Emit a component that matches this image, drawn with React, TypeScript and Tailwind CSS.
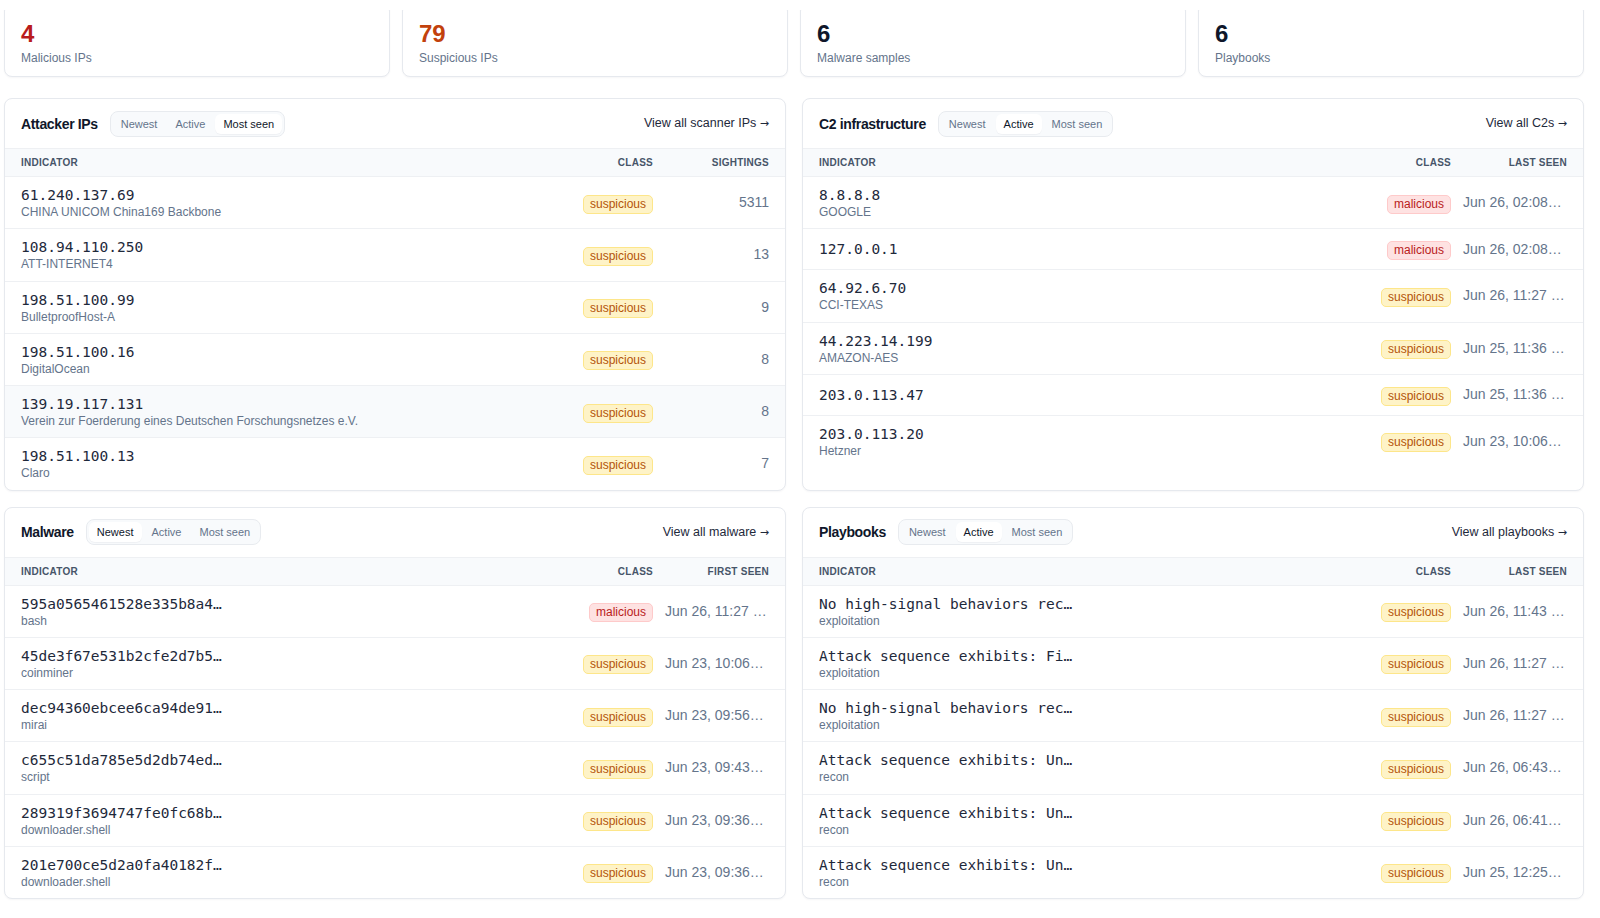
import React from "react";

type Cls = "malicious" | "suspicious";
type Row = { main: string; sub?: string; cls: Cls; last: string; hover?: boolean };

const statCards = [
  { value: "4", label: "Malicious IPs", color: "text-[#b91c1c]" },
  { value: "79", label: "Suspicious IPs", color: "text-[#c2410c]" },
  { value: "6", label: "Malware samples", color: "text-[#0f172a]" },
  { value: "6", label: "Playbooks", color: "text-[#0f172a]" },
];

const attackers: Row[] = [
  { main: "61.240.137.69", sub: "CHINA UNICOM China169 Backbone", cls: "suspicious", last: "5311" },
  { main: "108.94.110.250", sub: "ATT-INTERNET4", cls: "suspicious", last: "13" },
  { main: "198.51.100.99", sub: "BulletproofHost-A", cls: "suspicious", last: "9" },
  { main: "198.51.100.16", sub: "DigitalOcean", cls: "suspicious", last: "8" },
  { main: "139.19.117.131", sub: "Verein zur Foerderung eines Deutschen Forschungsnetzes e.V.", cls: "suspicious", last: "8", hover: true },
  { main: "198.51.100.13", sub: "Claro", cls: "suspicious", last: "7" },
];

const c2: Row[] = [
  { main: "8.8.8.8", sub: "GOOGLE", cls: "malicious", last: "Jun 26, 02:08…" },
  { main: "127.0.0.1", cls: "malicious", last: "Jun 26, 02:08…" },
  { main: "64.92.6.70", sub: "CCI-TEXAS", cls: "suspicious", last: "Jun 26, 11:27 …" },
  { main: "44.223.14.199", sub: "AMAZON-AES", cls: "suspicious", last: "Jun 25, 11:36 …" },
  { main: "203.0.113.47", cls: "suspicious", last: "Jun 25, 11:36 …" },
  { main: "203.0.113.20", sub: "Hetzner", cls: "suspicious", last: "Jun 23, 10:06…" },
];

const malware: Row[] = [
  { main: "595a0565461528e335b8a4…", sub: "bash", cls: "malicious", last: "Jun 26, 11:27 …" },
  { main: "45de3f67e531b2cfe2d7b5…", sub: "coinminer", cls: "suspicious", last: "Jun 23, 10:06…" },
  { main: "dec94360ebcee6ca94de91…", sub: "mirai", cls: "suspicious", last: "Jun 23, 09:56…" },
  { main: "c655c51da785e5d2db74ed…", sub: "script", cls: "suspicious", last: "Jun 23, 09:43…" },
  { main: "289319f3694747fe0fc68b…", sub: "downloader.shell", cls: "suspicious", last: "Jun 23, 09:36…" },
  { main: "201e700ce5d2a0fa40182f…", sub: "downloader.shell", cls: "suspicious", last: "Jun 23, 09:36…" },
];

const playbooks: Row[] = [
  { main: "No high-signal behaviors rec…", sub: "exploitation", cls: "suspicious", last: "Jun 26, 11:43 …" },
  { main: "Attack sequence exhibits: Fi…", sub: "exploitation", cls: "suspicious", last: "Jun 26, 11:27 …" },
  { main: "No high-signal behaviors rec…", sub: "exploitation", cls: "suspicious", last: "Jun 26, 11:27 …" },
  { main: "Attack sequence exhibits: Un…", sub: "recon", cls: "suspicious", last: "Jun 26, 06:43…" },
  { main: "Attack sequence exhibits: Un…", sub: "recon", cls: "suspicious", last: "Jun 26, 06:41…" },
  { main: "Attack sequence exhibits: Un…", sub: "recon", cls: "suspicious", last: "Jun 25, 12:25…" },
];

function Badge({ cls }: { cls: Cls }) {
  const style =
    cls === "malicious"
      ? "bg-[#fee2e2] border-[#fecaca] text-[#b91c1c]"
      : "bg-[#fef3c7] border-[#fde68a] text-[#b45309]";
  return (
    <span className={`inline-block rounded-[5px] border px-1.5 py-px text-[12px] leading-[15px] ${style}`}>
      {cls}
    </span>
  );
}

function Tabs({ active }: { active: string }) {
  const tabs = ["Newest", "Active", "Most seen"];
  return (
    <div className="ml-3 flex gap-0.5 rounded-lg border border-[#e8ebef] bg-[#f8fafc] p-0.5">
      {tabs.map((t) => (
        <div
          key={t}
          className={
            t === active
              ? "h-5 rounded-md bg-white px-2 text-[11px] leading-5 text-[#0f172a] shadow-[0_1px_1px_rgba(15,23,42,0.04)]"
              : "h-5 rounded-md px-2 text-[11px] leading-5 text-[#64748b]"
          }
        >
          {t}
        </div>
      ))}
    </div>
  );
}

function Panel({
  title,
  active,
  link,
  lastHead,
  rows,
  numeric,
}: {
  title: string;
  active: string;
  link: string;
  lastHead: string;
  rows: Row[];
  numeric?: boolean;
}) {
  return (
    <div className="overflow-hidden rounded-lg border border-[#e6e9ee] bg-white shadow-[0_1px_2px_rgba(15,23,42,0.04)]">
      <div className="flex h-[50px] items-center border-b border-[#eef0f3] px-4">
        <div className="text-sm font-bold tracking-tight text-[#0f172a]">{title}</div>
        <Tabs active={active} />
        <div className="flex-1" />
        <div className="text-[12.5px] text-[#1e293b]">
          {link} <span className="font-['DejaVu_Sans',sans-serif] text-[11px]">→</span>
        </div>
      </div>
      <div className="flex h-[28px] items-center border-b border-[#eef0f3] bg-[#f8fafc] px-4 text-[10px] font-bold uppercase tracking-wide text-[#475569]">
        <div className="flex-1">Indicator</div>
        <div className="w-[96px] text-right">Class</div>
        <div className="w-[116px] pl-3 text-right">{lastHead}</div>
      </div>
      <div>
        {rows.map((r, i) => (
          <div
            key={i}
            className={`flex items-center px-4 py-2 ${i > 0 ? "border-t border-[#eef0f3]" : ""} ${r.hover ? "bg-[#f8fafc]" : ""}`}
          >
            <div className="min-w-0 flex-1">
              <div className="font-['DejaVu_Sans_Mono',monospace] text-[14.5px] leading-5 text-[#1e293b]">{r.main}</div>
              {r.sub && <div className="text-[12px] leading-[15.25px] text-[#64748b]">{r.sub}</div>}
            </div>
            <div className="w-[96px] text-right">
              <Badge cls={r.cls} />
            </div>
            <div
              className={`w-[116px] whitespace-nowrap pl-3 text-[14px] text-[#64748b] ${numeric ? "text-right" : "text-left"}`}
            >
              {r.last}
            </div>
          </div>
        ))}
      </div>
    </div>
  );
}

export default function App() {
  return (
    <div className="min-h-[918px] bg-white font-['Liberation_Sans',Arial,sans-serif]">
      <div className="fixed left-0 right-0 top-0 z-10 h-[10px] bg-white" />
      <div className="pb-4 pl-1 pr-4 pt-[3px]">
        <div className="mb-[21px] grid grid-cols-4 gap-3">
          {statCards.map((c) => (
            <div
              key={c.label}
              className="rounded-lg border border-[#e6e9ee] bg-white px-4 pb-2 pt-4 shadow-[0_1px_2px_rgba(15,23,42,0.04)]"
            >
              <div className={`text-2xl font-bold leading-7 ${c.color}`}>{c.value}</div>
              <div className="text-[12px] leading-5 text-[#64748b]">{c.label}</div>
            </div>
          ))}
        </div>
        <div className="grid grid-cols-2 gap-4">
          <Panel title="Attacker IPs" active="Most seen" link="View all scanner IPs" lastHead="Sightings" rows={attackers} numeric />
          <Panel title="C2 infrastructure" active="Active" link="View all C2s" lastHead="Last seen" rows={c2} />
          <Panel title="Malware" active="Newest" link="View all malware" lastHead="First seen" rows={malware} />
          <Panel title="Playbooks" active="Active" link="View all playbooks" lastHead="Last seen" rows={playbooks} />
        </div>
      </div>
    </div>
  );
}
